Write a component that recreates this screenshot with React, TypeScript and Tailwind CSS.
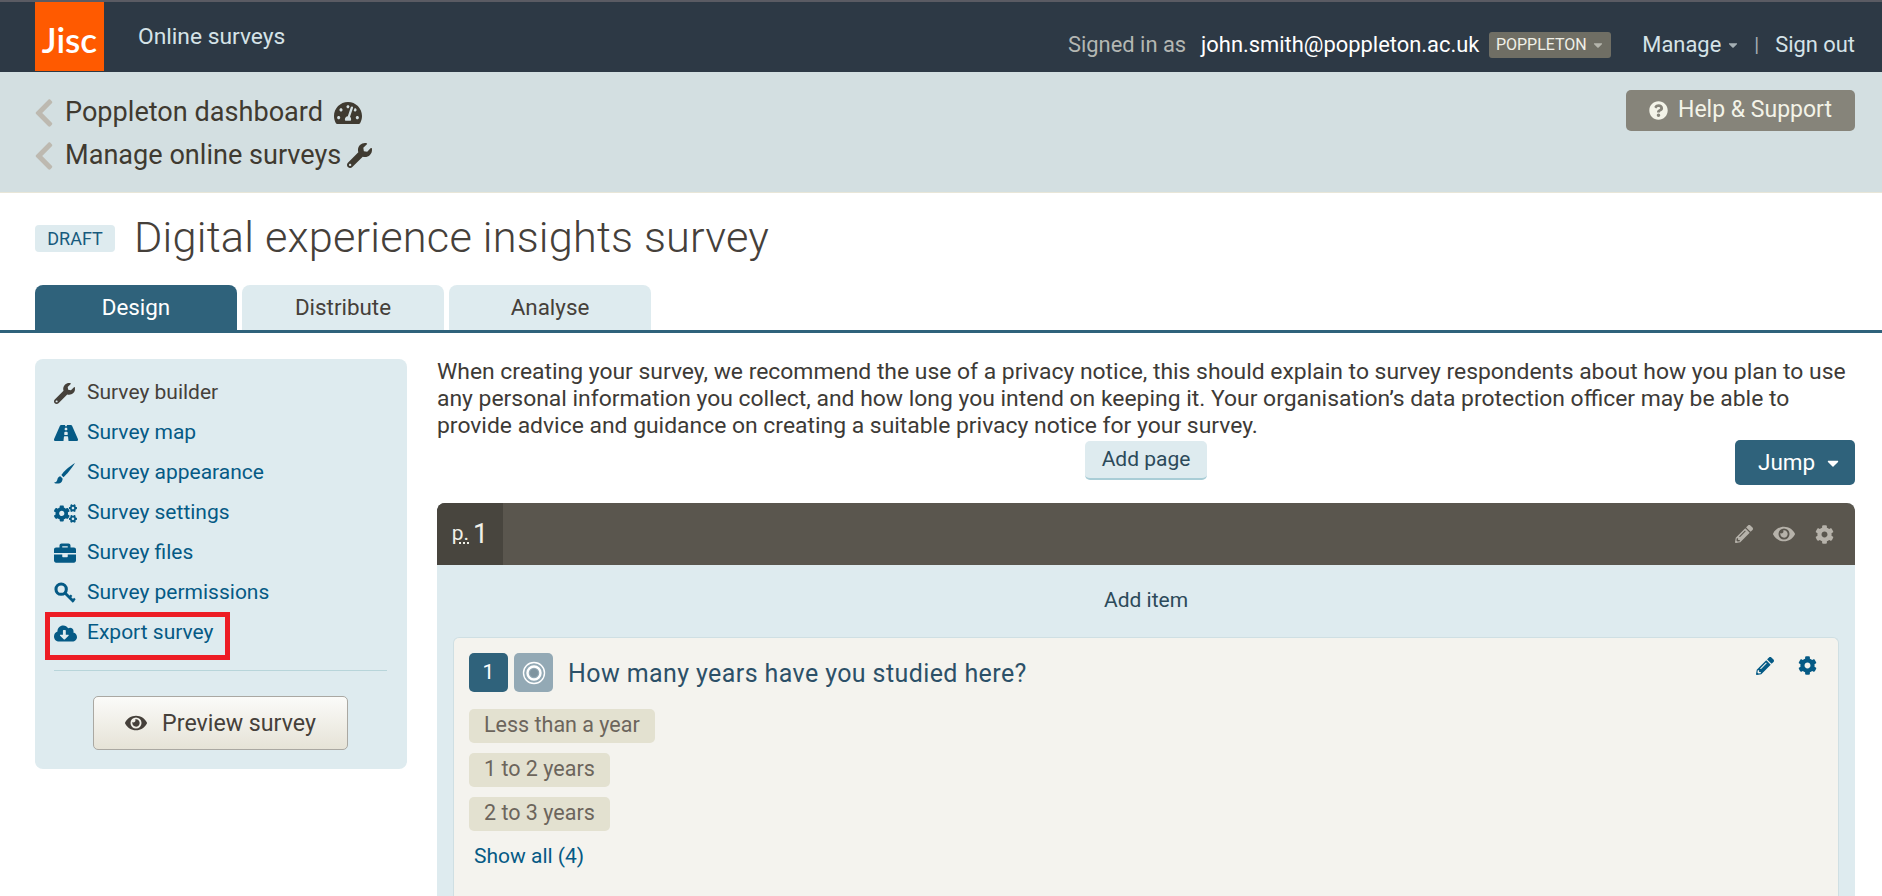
import React from "react";
import { FaBriefcase, FaCaretDown, FaChevronLeft, FaCloudDownloadAlt, FaCog, FaCogs, FaEye, FaPencilAlt, FaQuestionCircle, FaRoad, FaTachometerAlt, FaWrench } from "react-icons/fa";

const font = "font-['Roboto',sans-serif]";

// slim brush, the fa5 one is too fat
const BrushIcon: React.FC = () => (
  <svg viewBox="0 0 20 20" className="w-[21px] h-[21px]" fill="currentColor">
    <path d="M20 0C15 3 9 8 7 11.5L9 13.5C12 11 17 5 20 0Z" />
    <path d="M6 12.5C3.5 13 3.5 15 3 16.5C2.5 18 1.5 18.5 0 18.7C2 20 6 20 7.5 17.5C8.3 16 8.3 15 8 14.5Z" />
  </svg>
);

const KeyIcon: React.FC = () => (
  <svg viewBox="0 0 20 20" className="w-[22px] h-[22px]" fill="none" stroke="currentColor">
    <circle cx="6.5" cy="6.5" r="4.7" strokeWidth="2.8" />
    <path d="M10 10L18 18" strokeWidth="2.6" />
    <path d="M14 14L16 12M17 17L19 15" strokeWidth="2" />
  </svg>
);

const RadioIcon: React.FC = () => (
  <svg viewBox="0 0 24 24" className="w-[24px] h-[24px]" fill="none" stroke="#ffffff">
    <circle cx="12" cy="12" r="10.5" strokeWidth="1.4" />
    <circle cx="12" cy="12" r="6.5" strokeWidth="2.4" />
    <circle cx="12" cy="12" r="4" fill="#7f949f" stroke="none" />
  </svg>
);

const sideLinks = [
  { label: "Survey builder", icon: <FaWrench className="text-[21px]" />, active: true },
  { label: "Survey map", icon: <FaRoad className="text-[24px]" /> },
  { label: "Survey appearance", icon: <BrushIcon /> },
  { label: "Survey settings", icon: <FaCogs className="text-[23px]" /> },
  { label: "Survey files", icon: <FaBriefcase className="text-[22px]" /> },
  { label: "Survey permissions", icon: <KeyIcon /> },
];

const Header: React.FC = () => (
  <header>
    <div className="h-[72px] border-t-2 border-[#5a5b63] bg-[#2d3945] flex items-start justify-between pl-[35px] pr-[27px]">
      <div className="flex items-start">
        <div className="w-[69px] h-[69px] bg-[#ff5a00] flex items-center justify-center pt-[5px] text-white text-[35px] font-['Lato',sans-serif] font-semibold">
          Jisc
        </div>
        <span className="ml-[34px] mt-[21px] text-[22.8px] leading-[28px] text-[#d5e3e8]">Online surveys</span>
      </div>
      <div className="flex items-center mt-[29px] text-[21.9px] leading-[28px]">
        <span className="text-[#b4b7b3]">Signed in as</span>
        <span className="ml-[15px] text-white">john.smith@poppleton.ac.uk</span>
        <span className="ml-[10px] h-[26px] w-[122px] rounded-[3px] bg-[#6f6e64] text-[#f0f0e8] text-[16px] leading-[24px] flex items-center justify-center gap-1">
          POPPLETON <FaCaretDown className="text-[#b5b5ac] text-[14px]" />
        </span>
        <span className="ml-[31px] text-[#d5e3e8]">Manage</span>
        <FaCaretDown className="ml-[5px] text-[#a5b0b5] text-[14px]" />
        <span className="ml-[14px] text-[#a5b0b5] text-[20px]">|</span>
        <span className="ml-[16px] text-[#d5e3e8]">Sign out</span>
      </div>
    </div>
    <div className="h-[121px] bg-[#d3dfe1] border-b border-[#e8e6d8] flex items-start justify-between pl-[35px] pr-[27px] text-[#3f3a30]">
      <div className="pt-[19px]">
        <div className="flex items-center h-[43px] text-[27.1px]">
          <FaChevronLeft className="text-[#bdb9b0] text-[32px] mr-[5px] -ml-[7px]" />
          <span>Poppleton dashboard</span>
          <FaTachometerAlt className="ml-[11px] text-[28px]" />
        </div>
        <div className="flex items-center h-[43px] text-[27.1px]">
          <FaChevronLeft className="text-[#bdb9b0] text-[32px] mr-[5px] -ml-[7px]" />
          <span>Manage online surveys</span>
          <FaWrench className="ml-[6px] text-[25px]" />
        </div>
      </div>
      <button className="mt-[18px] h-[41px] px-[23px] rounded-[5px] bg-[#86847a] text-[#f3f3e8] text-[23px] flex items-center gap-[10px]">
        <FaQuestionCircle className="text-[19px]" /> Help & Support
      </button>
    </div>
  </header>
);

const TitleTabs: React.FC = () => (
  <div>
    <div className="flex items-center pl-[35px] h-[92px] pb-[2px]">
      <span className="h-[27px] w-[80px] rounded-[4px] bg-[#deebef] text-[#175a7d] text-[18px] flex items-center justify-center">DRAFT</span>
      <h1 className="ml-[19px] text-[43.3px] font-light text-[#45403a] tracking-[0.2px]">Digital experience insights survey</h1>
    </div>
    <div className="flex items-end gap-[5px] pl-[35px] border-b-[3px] border-[#2f627b]">
      <div className="w-[202px] h-[45px] rounded-t-[8px] bg-[#2f627b] text-white text-[22.4px] flex items-center justify-center">Design</div>
      <div className="w-[202px] h-[45px] rounded-t-[8px] bg-[#deebef] text-[#45403a] text-[22.4px] flex items-center justify-center">Distribute</div>
      <div className="w-[202px] h-[45px] rounded-t-[8px] bg-[#deebef] text-[#45403a] text-[22.4px] flex items-center justify-center">Analyse</div>
    </div>
  </div>
);

const Sidebar: React.FC = () => (
  <aside className="w-[372px] h-[410px] shrink-0 rounded-[8px] bg-[#deebef] px-[19px] pt-[14px] text-[21px]">
    <ul>
      {sideLinks.map(({ label, icon, active }) => (
        <li key={label} className={`h-[40px] flex items-center ${active ? "text-[#45403a]" : "text-[#055a85]"}`}>
          <span className="w-[33px] flex justify-start">{icon}</span>
          {label}
        </li>
      ))}
      <li className="h-[40px] flex items-center text-[#055a85] relative">
        <span className="w-[33px] flex justify-start"><FaCloudDownloadAlt className="text-[23px]" /></span>
        Export survey
        <span className="absolute -left-[9px] -top-[1px] w-[185px] h-[48px] border-[5px] border-[#ed1c24]" />
      </li>
    </ul>
    <div className="mt-[17px] border-t border-[#b8d5da] mr-[1px]" />
    <button className="mt-[25px] ml-[39px] w-[255px] h-[54px] rounded-[5px] border border-[#aaa8a2] bg-gradient-to-b from-[#fbfbf9] to-[#e6e3d7] text-[#45403a] text-[23.2px] flex items-center justify-center gap-[15px]">
      <FaEye className="text-[22px]" /> Preview survey
    </button>
  </aside>
);

const Pill: React.FC<{ text: string }> = ({ text }) => (
  <div className="w-fit h-[34px] rounded-[5px] bg-[#e3e1d0] px-[15px] text-[#6c655c] text-[21.5px] flex items-center mb-[10px]">{text}</div>
);

const MainPanel: React.FC = () => (
  <main className="flex-1 min-w-0 text-[#45403a]">
    <p className="text-[22.9px] leading-[27px] text-[#3d3a36] -mt-[1px]">
      When creating your survey, we recommend the use of a privacy notice, this should explain to survey respondents about how you plan to use any personal information you collect, and how long you intend on keeping it. Your organisation’s data protection officer may be able to provide advice and guidance on creating a suitable privacy notice for your survey.
    </p>
    <div className="grid grid-cols-[1fr_auto_1fr] items-start mt-[1px]">
      <span />
      <button className="mt-[1px] h-[39px] w-[122px] rounded-[5px] bg-[#deebef] border-b-2 border-[#a9cdd6] text-[#2c4a5a] text-[21px]">Add page</button>
      <button className="justify-self-end h-[45px] w-[120px] rounded-[5px] bg-[#2f627b] text-white text-[22.5px] flex items-center pl-[23px] gap-[9px]">
        Jump <FaCaretDown className="text-[18px]" />
      </button>
    </div>
    <section className="mt-[18px] rounded-t-[8px] bg-[#deebef] overflow-hidden">
      <div className="h-[62px] bg-[#5a564e] flex items-stretch justify-between">
        <div className="w-[66px] bg-[#48453e] flex items-center justify-center text-[#f0f0e8]">
          <span className="text-[21px] underline decoration-dotted underline-offset-2">p.</span>
          <span className="ml-[4px] text-[27px]">1</span>
        </div>
        <div className="flex items-center gap-[20px] pr-[21px] text-[#b6b2aa]">
          <FaPencilAlt className="text-[18px]" />
          <FaEye className="text-[22px]" />
          <FaCog className="text-[19px]" />
        </div>
      </div>
      <div className="h-[72px] flex items-center justify-center text-[21px] text-[#2c4a5a]">Add item</div>
      <div className="mx-[16px] rounded-t-[6px] bg-[#f4f3ee] border-l border-r border-t border-[#cfdfe3] px-[15px] pt-[15px] h-[300px] relative">
        <div className="flex items-center gap-[6px]">
          <span className="w-[39px] h-[39px] rounded-[5px] bg-[#2f627b] text-white text-[21px] flex items-center justify-center">1</span>
          <span className="w-[39px] h-[39px] rounded-[5px] bg-[#93a9b5] flex items-center justify-center"><RadioIcon /></span>
          <span className="ml-[9px] pt-[2px] text-[25px] tracking-[0.4px] text-[#2c5068]">How many years have you studied here?</span>
        </div>
        <div className="mt-[16px]">
          <Pill text="Less than a year" />
          <Pill text="1 to 2 years" />
          <Pill text="2 to 3 years" />
        </div>
        <div className="ml-[5px] mt-[9px] text-[21px] text-[#055a85]">Show all (4)</div>
        <div className="absolute right-[21px] top-[18px] flex items-center gap-[24px] text-[#055a85]">
          <FaPencilAlt className="text-[18px]" />
          <FaCog className="text-[19px]" />
        </div>
        <div className="text-center text-[21px] text-[#2c4a5a] mt-[20px]">Add item</div>
      </div>
    </section>
  </main>
);

const App: React.FC = () => (
  <div className={`${font} h-[896px] overflow-hidden bg-white`}>
    <Header />
    <TitleTabs />
    <div className="flex items-start gap-[30px] pl-[35px] pr-[27px] pt-[26px]">
      <Sidebar />
      <MainPanel />
    </div>
  </div>
);

export default App;
